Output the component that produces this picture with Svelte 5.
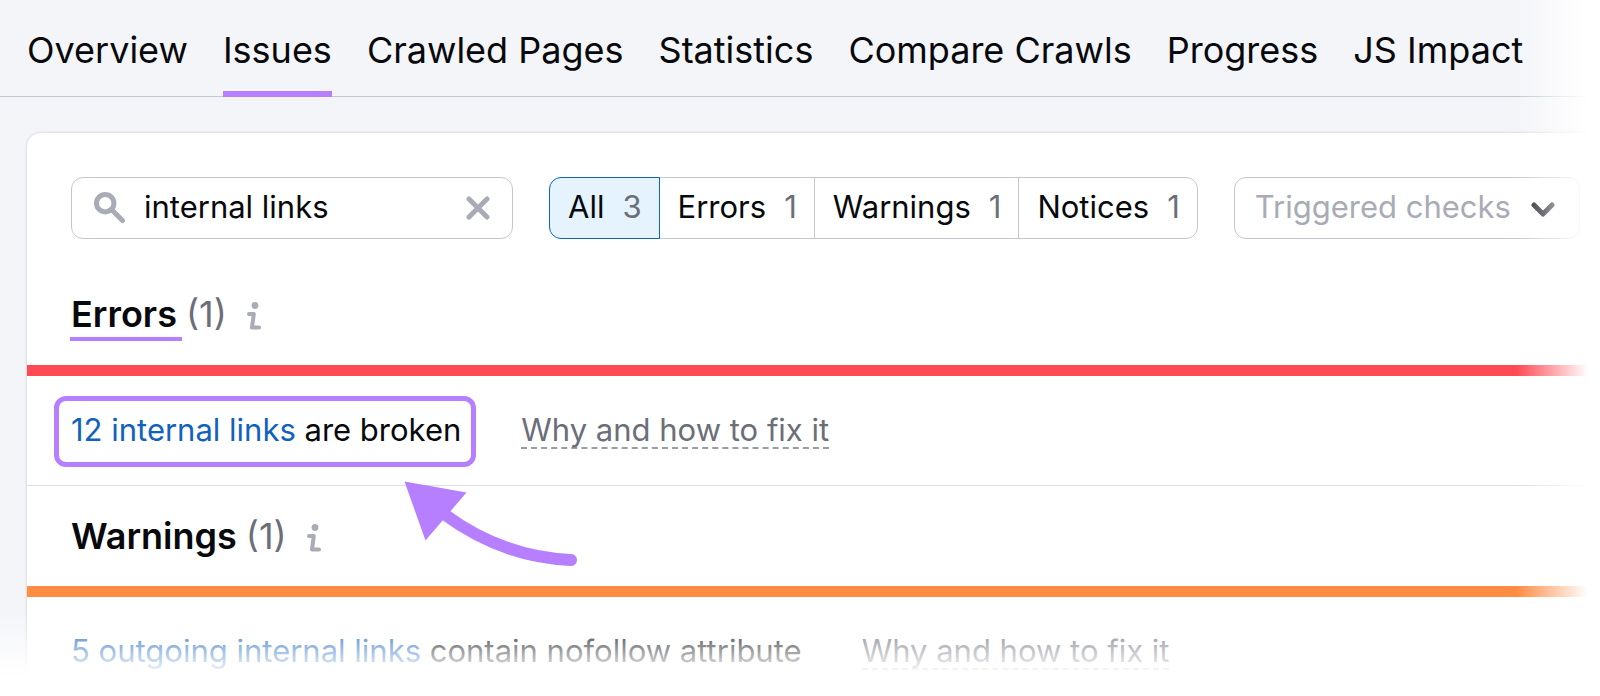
<script>
  const tabs = ['Overview', 'Issues', 'Crawled Pages', 'Statistics', 'Compare Crawls', 'Progress', 'JS Impact'];
  const filters = [
    { name: 'All', count: 3 },
    { name: 'Errors', count: 1 },
    { name: 'Warnings', count: 1 },
    { name: 'Notices', count: 1 }
  ];
  let tab = $state('Issues');
  let filter = $state('All');
  let query = $state('internal links');
</script>

{#snippet info(label)}
  <button class="info" aria-label={label}>
    <svg width="14" height="28" viewBox="0 0 14 28" aria-hidden="true">
      <circle cx="8" cy="3.5" r="3.4" />
      <path d="M2 12H6.8L5 25.5H12" />
    </svg>
  </button>
{/snippet}

<div class="page">
  <nav class="tabs">
    {#each tabs as name}
      <a href="#top" class:active={tab === name} onclick={() => (tab = name)}>{name}</a>
    {/each}
  </nav>

  <main class="card">
    <div class="toolbar">
      <div class="search">
        <svg width="32" height="32" viewBox="0 0 32 32" aria-hidden="true">
          <circle cx="11.2" cy="11.2" r="8.7" />
          <path d="M17.5 17.5L28.5 28.5" />
        </svg>
        <input type="text" aria-label="Search issues" bind:value={query} />
        <button class="clear" aria-label="Clear search" onclick={() => (query = '')}>
          <svg width="24" height="24" viewBox="0 0 24 24" aria-hidden="true">
            <path d="M3 3L21 21M21 3L3 21" />
          </svg>
        </button>
      </div>

      <div class="filters">
        {#each filters as f}
          <button class:selected={filter === f.name} onclick={() => (filter = f.name)}>
            {f.name}<span class="count">{f.count}</span>
          </button>
        {/each}
      </div>

      <div class="checks">
        <select aria-label="Triggered checks">
          <option>Triggered checks</option>
        </select>
        <svg width="24" height="16" viewBox="0 0 24 16" aria-hidden="true">
          <path d="M3 3L12 12L21 3" />
        </svg>
      </div>
    </div>

    <section>
      <header class="errors">
        <h2 class="marked">Errors</h2>
        <span class="total">(1)</span>
        {@render info('About errors')}
      </header>
      <div class="row">
        <p class="highlight"><a href="#top">12 internal links</a> are broken</p>
        <button class="hint">Why and how to fix it</button>
        <svg class="arrow" width="174" height="88" viewBox="0 0 174 88" aria-hidden="true">
          <path class="head" d="M0.5 0.5L62.5 11.5L21.5 59.5Z" />
          <path class="shaft" d="M40 33Q98 76 167 79" />
        </svg>
      </div>
    </section>

    <section>
      <header class="warnings">
        <h2>Warnings</h2>
        <span class="total">(1)</span>
        {@render info('About warnings')}
      </header>
      <div class="row">
        <p><a href="#top">5 outgoing internal links</a> contain nofollow attribute</p>
        <button class="hint">Why and how to fix it</button>
      </div>
    </section>
  </main>
</div>

<style>
  :global(body) {
    margin: 0;
    background: #fff;
  }

  .page {
    position: relative;
    box-sizing: border-box;
    height: 100vh;
    overflow: hidden;
    background: #f4f5f9;
    color: #08090c;
    font-family: Inter, sans-serif;
    font-size: 31px;
    font-weight: 400;
    line-height: 40px;
  }

  .page::before,
  .page::after {
    content: '';
    position: absolute;
    right: 0;
    bottom: 0;
    z-index: 2;
    pointer-events: none;
  }

  .page::before {
    top: 0;
    width: 84px;
    background: linear-gradient(to right, transparent, #fff 72px);
  }

  .page::after {
    left: 0;
    height: 84px;
    background: linear-gradient(to bottom, transparent, #fff 64px);
  }

  button,
  input,
  select {
    padding: 0;
    border: 0;
    background: none;
    color: inherit;
    font: inherit;
  }

  button {
    cursor: pointer;
  }

  svg {
    display: block;
    flex: none;
    fill: none;
    stroke: #a9abb6;
    stroke-width: 5;
    stroke-linecap: round;
    stroke-linejoin: round;
  }

  a {
    color: #1162bd;
    text-decoration: none;
  }

  .tabs {
    display: flex;
    gap: 35px;
    padding: 0 27px;
    border-bottom: 1px solid #c4c7cf;
    font-size: 36px;
    white-space: nowrap;
  }

  .tabs a {
    margin-bottom: -1px;
    padding: 30px 0 21px;
    border-bottom: 6px solid transparent;
    color: inherit;
  }

  .tabs .active {
    border-color: #b57fff;
  }

  .card {
    margin: 36px 0 0 27px;
    padding-top: 44px;
    border-top-left-radius: 14px;
    background: #fff;
    box-shadow: 0 0 3px rgba(25, 27, 35, 0.2);
  }

  .toolbar {
    display: flex;
    gap: 36px;
    padding: 0 20px 0 44px;
    white-space: nowrap;
  }

  .search,
  .checks {
    display: flex;
    align-items: center;
    box-sizing: border-box;
    height: 62px;
    border: 1px solid #c4c7cf;
    border-radius: 12px;
  }

  .search {
    flex: none;
    width: 442px;
    padding: 0 22px;
    gap: 18px;
  }

  .search input {
    flex: 1;
    min-width: 0;
    padding-bottom: 2px;
    outline: none;
  }

  .filters {
    display: flex;
    height: 62px;
  }

  .filters button {
    display: flex;
    align-items: center;
    gap: 18px;
    box-sizing: border-box;
    padding: 0 17px 2px 18px;
    border: 1px solid #c4c7cf;
    margin-left: -1px;
  }

  .filters button:first-child {
    margin-left: 0;
    border-radius: 12px 0 0 12px;
  }

  .filters button:last-child {
    border-radius: 0 12px 12px 0;
  }

  .filters .selected {
    position: relative;
    border-color: #1162bd;
    background: #e5f3ff;
  }

  .count,
  .total {
    color: #6c6e79;
  }

  .checks {
    position: relative;
    flex: 1;
    color: #a9abb6;
  }

  .checks select {
    width: 100%;
    height: 100%;
    padding: 0 60px 2px 20px;
    appearance: none;
    outline: none;
  }

  .checks svg {
    position: absolute;
    top: 24px;
    right: 24px;
    stroke: #191b23;
    pointer-events: none;
  }

  header {
    display: flex;
    align-items: center;
    box-sizing: border-box;
    padding: 0 44px;
    border-bottom: 11px solid;
    font-size: 36px;
  }

  .errors {
    height: 137px;
    padding-top: 24px;
    border-color: #ff4953;
  }

  .warnings {
    height: 111px;
    border-color: #ff8c43;
  }

  h2 {
    margin: 0;
    font-size: inherit;
    font-weight: 600;
  }

  .marked {
    position: relative;
  }

  .marked::after {
    content: '';
    position: absolute;
    right: -5px;
    bottom: -7px;
    left: -1px;
    height: 4px;
    background: #b57fff;
  }

  .total {
    margin: 0 20px 0 9px;
  }

  .info svg {
    margin-top: 3px;
    stroke-width: 4;
  }

  .info circle {
    fill: #a9abb6;
    stroke: none;
  }

  .row {
    position: relative;
    display: flex;
    align-items: center;
    gap: 60px;
    box-sizing: border-box;
    height: 110px;
    padding: 0 44px;
    border-bottom: 1px solid #dcdee4;
    white-space: nowrap;
  }

  p {
    margin: 0;
    padding-bottom: 2px;
  }

  .highlight {
    position: relative;
  }

  .highlight::before {
    content: '';
    position: absolute;
    inset: -14px -15px -15px -17px;
    border: 5px solid #b57fff;
    border-radius: 12px;
  }

  .hint {
    border-bottom: 2px dashed #9a9ca6;
    color: #6c6e79;
    line-height: 34px;
  }

  .arrow {
    position: absolute;
    top: 105px;
    left: 377px;
    z-index: 1;
  }

  .head {
    fill: #b57fff;
    stroke: none;
  }

  .shaft {
    stroke: #b57fff;
    stroke-width: 12;
  }
</style>
